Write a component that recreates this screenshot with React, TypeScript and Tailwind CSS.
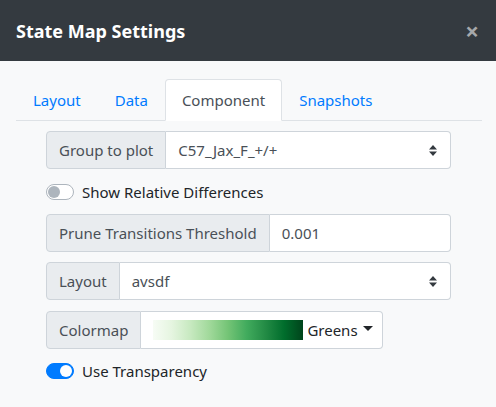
import React from "react";

const font = { fontFamily: '"Segoe UI", "Noto Sans", sans-serif' };

const SelectArrows = () => (
  <svg width="8" height="11" viewBox="0 0 8 11" className="shrink-0">
    <path d="M4 0 L8 4.5 H0 Z M0 6.5 H8 L4 11 Z" fill="#343a40" />
  </svg>
);

const Switch = ({ on, label }: { on: boolean; label: string }) => (
  <div className="flex items-center h-6">
    <div
      className={
        on
          ? "relative w-[28px] h-4 rounded-full bg-[#007bff] border border-[#007bff]"
          : "relative w-[28px] h-4 rounded-full bg-white border border-[#adb5bd]"
      }
    >
      <div
        className={
          on
            ? "absolute top-[1px] left-[13px] w-3 h-3 rounded-full bg-white"
            : "absolute top-[1px] left-[1px] w-3 h-3 rounded-full bg-[#adb5bd]"
        }
      />
    </div>
    <span className="ml-2 text-[#212529]">{label}</span>
  </div>
);

const Addon = ({ children }: { children: React.ReactNode }) => (
  <div className="flex items-center px-3 bg-[#e9ecef] border border-[#ced4da] rounded-l text-[#495057] whitespace-nowrap">
    {children}
  </div>
);

export default function App() {
  return (
    <div className="w-[496px] h-[407px] bg-[#f8f9fa] text-[15px] leading-6" style={font}>
      {/* Header */}
      <div className="h-[61px] bg-[#343a40] flex items-center justify-between pl-4 pr-[17px]">
        <h5 className="text-[18px] font-bold text-white leading-7">State Map Settings</h5>
        <span className="text-[#a6a8ab] text-[24px] font-bold leading-none">×</span>
      </div>

      {/* Body */}
      <div className="px-4 pt-[18px]">
        <div className="flex border-b border-[#dee2e6] w-[466px]">
          <div className="px-4 py-2 border border-transparent text-[#007bff] -mb-px">Layout</div>
          <div className="px-4 py-2 border border-transparent text-[#007bff] -mb-px">Data</div>
          <div className="px-4 py-2 border border-[#dee2e6] border-b-white rounded-t bg-white text-[#495057] -mb-px">
            Component
          </div>
          <div className="px-4 py-2 border border-transparent text-[#007bff] -mb-px">Snapshots</div>
        </div>

        <div className="px-[30px] pt-[10px] flex flex-col">
          <div className="flex h-[38px] w-[405px]">
            <Addon>Group to plot</Addon>
            <div className="flex-1 flex items-center justify-between pl-3 pr-[13px] bg-white border border-l-0 border-[#ced4da] rounded-r text-[#495057]">
              <span>C57_Jax_F_+/+</span>
              <SelectArrows />
            </div>
          </div>

          <div className="mt-[11px] mb-[10px]">
            <Switch on={false} label="Show Relative Differences" />
          </div>

          <div className="flex h-[38px] w-[405px]">
            <Addon>Prune Transitions Threshold</Addon>
            <div className="flex-1 flex items-center pl-3 bg-white border border-l-0 border-[#ced4da] rounded-r text-[#495057]">
              0.001
            </div>
          </div>

          <div className="flex h-[38px] w-[405px] mt-[10px]">
            <Addon>Layout</Addon>
            <div className="flex-1 flex items-center justify-between pl-3 pr-[13px] bg-white border border-l-0 border-[#ced4da] rounded-r text-[#495057]">
              <span>avsdf</span>
              <SelectArrows />
            </div>
          </div>

          <div className="flex h-[38px] self-start mt-[11px]">
            <Addon>Colormap</Addon>
            <div className="flex items-center pl-3 pr-[9px] bg-white border border-l-0 border-[#ced4da] rounded-r">
              <div className="w-[150px] h-5 bg-[linear-gradient(to_right,#f7fcf5,#e5f5e0,#c7e9c0,#a1d99b,#74c476,#41ab5d,#238b45,#006d2c,#00441b)]" />
              <span className="ml-1 text-[#212529]">Greens</span>
              <svg width="10" height="5" viewBox="0 0 10 5" className="ml-[5px] mb-[3px]">
                <path d="M0 0 H10 L5 5 Z" fill="#212529" />
              </svg>
            </div>
          </div>

          <div className="mt-[10px]">
            <Switch on={true} label="Use Transparency" />
          </div>
        </div>
      </div>
    </div>
  );
}
